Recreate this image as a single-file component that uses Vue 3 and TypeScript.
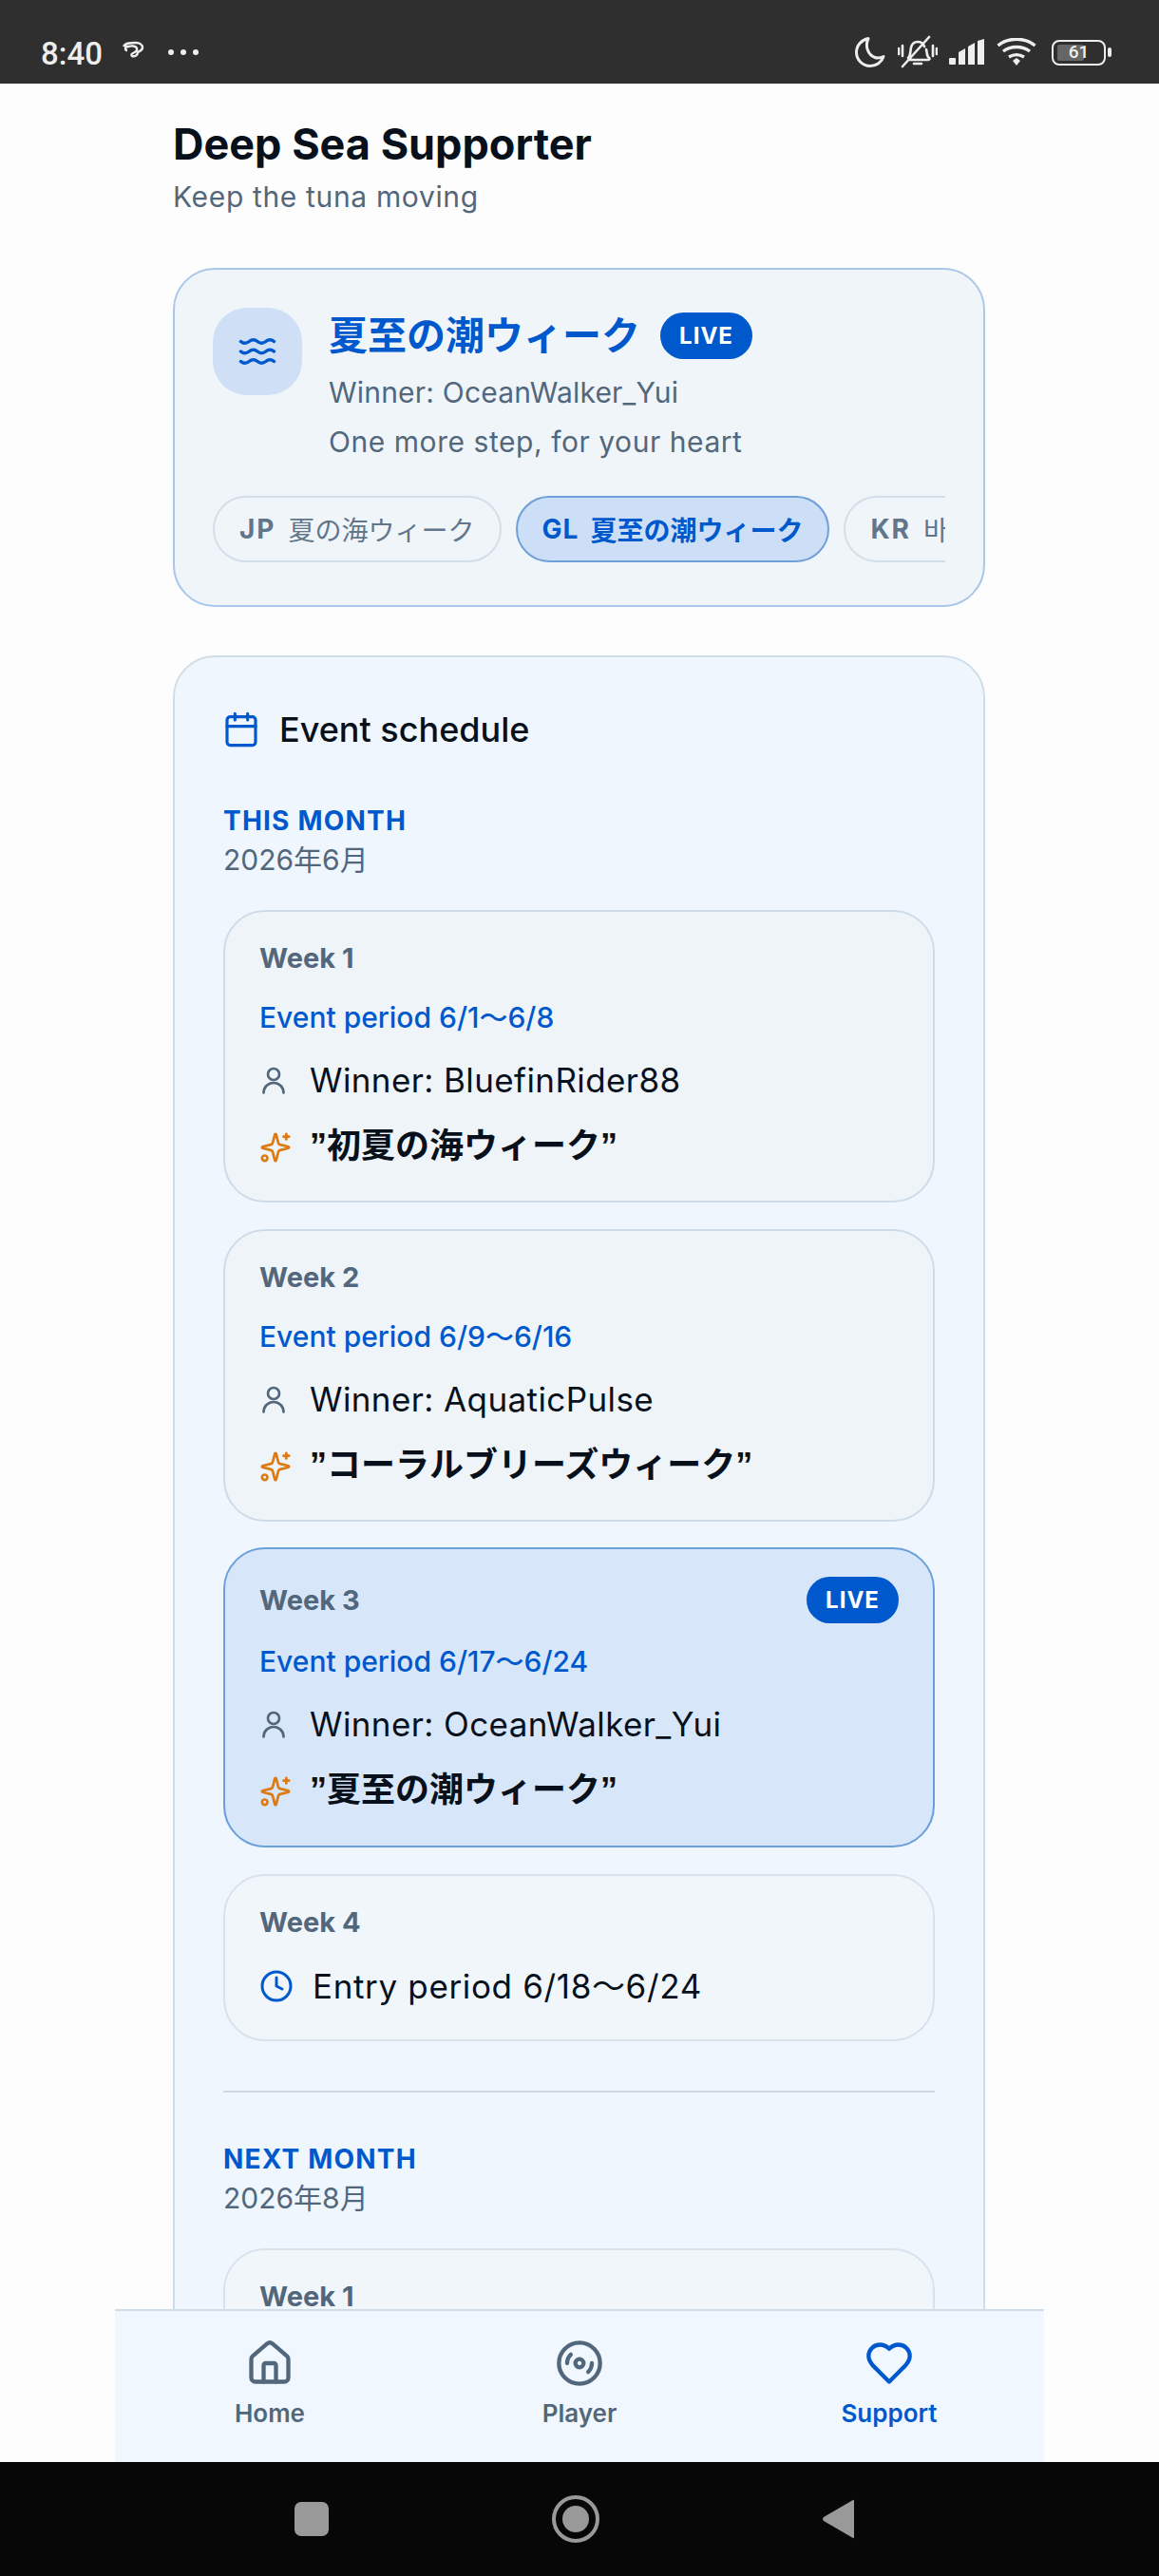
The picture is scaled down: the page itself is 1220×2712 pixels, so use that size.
<script setup lang="ts">
interface Week {
  label: string
  period?: string
  winner?: string
  theme?: string
  live?: boolean
  entry?: string
}
const weeks: Week[] = [
  { label: 'Week 1', period: 'Event period 6/1〜6/8', winner: 'Winner: BluefinRider88', theme: '”初夏の海ウィーク”' },
  { label: 'Week 2', period: 'Event period 6/9〜6/16', winner: 'Winner: AquaticPulse', theme: '”コーラルブリーズウィーク”' },
  { label: 'Week 3', period: 'Event period 6/17〜6/24', winner: 'Winner: OceanWalker_Yui', theme: '”夏至の潮ウィーク”', live: true },
  { label: 'Week 4', entry: 'Entry period 6/18〜6/24' },
]
const chips = [
  { code: 'JP', name: '夏の海ウィーク', active: false },
  { code: 'GL', name: '夏至の潮ウィーク', active: true },
  { code: 'KR', name: '바다의 주간', active: false },
]
</script>

<template>
  <div class="phone">
    <header class="status">
      <div class="status-left">
        <span class="time">8:40</span>
        <svg class="bird" width="24" height="20" viewBox="0 0 24 20" fill="none">
          <path d="M2 6c2-4 8-4 13-4 4 0 7 2 7 5 0 3-3 4-5 5 0 3-3 5-6 4-1-1-1-2 1-3 2-1 5-3 4-5-1-3-6-3-9-2-2 0-3 1-3 2 0 1 1 2 2 2" stroke="#eee" stroke-width="2.4" />
        </svg>
        <span class="dots"><i></i><i></i><i></i></span>
      </div>
      <div class="status-right">
        <svg width="34" height="34" viewBox="0 0 34 34" fill="none"><path d="M15 2.500C8 4 2.500 9.500 2.500 17c0 8 6.500 14.500 14.500 14.500 6.500 0 12-4 14-10-3 1.500-6 2-9 1C15 20 11 11 15 2.500Z" stroke="#eee" stroke-width="3" stroke-linejoin="round"/></svg>
        <svg width="42" height="36" viewBox="0 0 42 36" fill="none" stroke="#eee" stroke-width="2.600" stroke-linecap="round"><path d="M11 24c3-3 2-7 3-11 1-4 4-6 7-6s6 2 7 5M30 15c1 3 0 7 3 9 1 1 0 2-1 2H13M17 30h8M33 2 5 33M1 14v6M5 11v11M37 11v11M41 14v6"/></svg>
        <svg width="38" height="28" viewBox="0 0 38 28" fill="#eee"><rect x="0" y="20" width="7" height="7" rx="1"/><path d="M10 14l7-4v17h-7zM20 8l7-4v23h-7zM30 2l7-2v27h-7z"/></svg>
        <svg width="42" height="30" viewBox="0 0 42 30" fill="none" stroke="#eee" stroke-width="3.400"><path d="M1.500 8c11-9 28-9 39 0M7 14c8-6 20-6 28 0M13 20c5-3 11-3 16 0"/><path d="M17 24l4-3 4 3-4 5z" fill="#eee" stroke="none"/></svg>
        <div class="battery">
          <div class="batt-body"><span class="batt-fill"></span><span class="batt-num">61</span></div>
          <span class="batt-tip"></span>
        </div>
      </div>
    </header>

    <main class="screen">
      <div class="content">
        <h1 class="title">Deep Sea Supporter</h1>
        <p class="subtitle">Keep the tuna moving</p>

        <section class="hero">
          <div class="hero-top">
            <div class="hero-icon">
              <svg width="42" height="42" viewBox="0 0 24 24" fill="none" stroke="#0059cc" stroke-width="2" stroke-linecap="round" stroke-linejoin="round">
                <path d="M2 6c.6.5 1.200 1 2.500 1C7 7 7 5 9.500 5c2.600 0 2.400 2 5 2 2.500 0 2.500-2 5-2 1.300 0 1.900.5 2.500 1"/>
                <path d="M2 12c.6.5 1.200 1 2.500 1 2.500 0 2.500-2 5-2 2.600 0 2.400 2 5 2 2.500 0 2.500-2 5-2 1.300 0 1.900.5 2.500 1"/>
                <path d="M2 18c.6.5 1.200 1 2.500 1 2.500 0 2.500-2 5-2 2.600 0 2.400 2 5 2 2.500 0 2.500-2 5-2 1.300 0 1.900.5 2.500 1"/>
              </svg>
            </div>
            <div class="hero-text">
              <div class="hero-head">
                <span class="hero-name">夏至の潮ウィーク</span>
                <span class="live">LIVE</span>
              </div>
              <p class="hero-line first">Winner: OceanWalker_Yui</p>
              <p class="hero-line">One more step, for your heart</p>
            </div>
          </div>
          <div class="chips">
            <div v-for="c in chips" :key="c.code" class="chip" :class="{ active: c.active }">
              <b>{{ c.code }}</b><span>{{ c.name }}</span>
            </div>
          </div>
        </section>

        <section class="schedule">
          <div class="sched-head">
            <svg width="40" height="40" viewBox="0 0 24 24" fill="none" stroke="#0059cc" stroke-width="1.900" stroke-linecap="round" stroke-linejoin="round">
              <path d="M8 2v4M16 2v4"/><rect x="3" y="4" width="18" height="18" rx="2"/><path d="M3 10h18"/>
            </svg>
            <h2>Event schedule</h2>
          </div>

          <div class="month-label">THIS MONTH</div>
          <div class="month-date">2026年6月</div>

          <div class="weeks">
            <article v-for="w in weeks" :key="w.label" class="week" :class="{ current: w.live, upcoming: !!w.entry }">
              <div class="week-top">
                <span class="week-label">{{ w.label }}</span>
                <span v-if="w.live" class="live">LIVE</span>
              </div>
              <template v-if="w.period">
                <div class="period">{{ w.period }}</div>
                <div class="row winner">
                  <svg width="36" height="36" viewBox="0 0 24 24" fill="none" stroke="#52677c" stroke-width="1.800" stroke-linecap="round"><circle cx="12" cy="8" r="4"/><path d="M19 21a7 7 0 0 0-14 0"/></svg>
                  <span>{{ w.winner }}</span>
                </div>
                <div class="row theme">
                  <svg width="34" height="34" viewBox="0 0 24 24" fill="none" stroke="#dd7a12" stroke-width="1.900" stroke-linecap="round" stroke-linejoin="round"><path d="M9.937 15.500A2 2 0 0 0 8.500 14.063l-6.135-1.582a.5.5 0 0 1 0-.962L8.500 9.936A2 2 0 0 0 9.937 8.500l1.582-6.135a.5.5 0 0 1 .963 0L14.063 8.500A2 2 0 0 0 15.500 9.937l6.135 1.581a.5.5 0 0 1 0 .964L15.500 14.063a2 2 0 0 0-1.437 1.437l-1.582 6.135a.5.5 0 0 1-.963 0z"/><path d="M20 2v4M22 4h-4"/><circle cx="4" cy="20" r="2"/></svg>
                  <span>{{ w.theme }}</span>
                </div>
              </template>
              <div v-else class="row entry">
                <svg width="36" height="36" viewBox="0 0 24 24" fill="none" stroke="#0059cc" stroke-width="2" stroke-linecap="round" stroke-linejoin="round"><circle cx="12" cy="12" r="10"/><path d="M12 6v6l4 2"/></svg>
                <span>{{ w.entry }}</span>
              </div>
            </article>
          </div>

          <hr class="divider" />

          <div class="month-label">NEXT MONTH</div>
          <div class="month-date">2026年8月</div>
          <article class="week next">
            <div class="week-top"><span class="week-label">Week 1</span></div>
          </article>
        </section>
      </div>

      <nav class="tabbar">
        <div class="tab">
          <svg width="52" height="52" viewBox="0 0 24 24" fill="none" stroke="currentColor" stroke-width="2" stroke-linecap="round" stroke-linejoin="round"><path d="M15 21v-8a1 1 0 0 0-1-1h-4a1 1 0 0 0-1 1v8"/><path d="M3 10a2 2 0 0 1 .709-1.528l7-5.999a2 2 0 0 1 2.582 0l7 5.999A2 2 0 0 1 21 10v9a2 2 0 0 1-2 2H5a2 2 0 0 1-2-2z"/></svg>
          <span>Home</span>
        </div>
        <div class="tab">
          <svg width="52" height="52" viewBox="0 0 24 24" fill="none" stroke="currentColor" stroke-width="2" stroke-linecap="round" stroke-linejoin="round"><circle cx="12" cy="12" r="10"/><path d="M6 12c0-1.700.7-3.200 1.800-4.200"/><circle cx="12" cy="12" r="2"/><path d="M18 12c0 1.700-.7 3.200-1.800 4.200"/></svg>
          <span>Player</span>
        </div>
        <div class="tab on">
          <svg width="52" height="52" viewBox="0 0 24 24" fill="none" stroke="currentColor" stroke-width="2" stroke-linecap="round" stroke-linejoin="round"><path d="M19 14c1.490-1.460 3-3.210 3-5.500A5.500 5.500 0 0 0 16.500 3c-1.760 0-3 .5-4.500 2-1.500-1.500-2.740-2-4.500-2A5.500 5.500 0 0 0 2 8.500c0 2.300 1.500 4.050 3 5.500l7 7Z"/></svg>
          <span>Support</span>
        </div>
      </nav>
    </main>

    <footer class="sysnav">
      <span class="sq"></span>
      <span class="ring"><i></i></span>
      <svg width="36" height="44" viewBox="0 0 36 44"><path d="M34 3v38q0 2-2 .5L2 24q-2-2 0-4L32 2.500q2-1.500 2 .5Z" fill="#999"/></svg>
    </footer>
  </div>
</template>

<style>
html, body { margin: 0; background: #fdfdfd; }
</style>

<style scoped>
.phone {
  width: 1220px;
  height: 2712px;
  display: flex;
  flex-direction: column;
  overflow: hidden;
  background: #fdfdfd;
  font-family: Inter, "Noto Sans CJK JP", sans-serif;
  color: #08111b;
}
.status {
  height: 88px;
  flex: none;
  background: #2f2f2f;
  display: flex;
  justify-content: space-between;
  align-items: flex-end;
  padding: 0 50px 14px 43px;
  box-sizing: border-box;
  color: #eee;
}
.status-left { display: flex; align-items: center; gap: 17px; padding-bottom: 0; margin-bottom: -2px; }
.time { font: 500 33px/38px Roboto, sans-serif; }
.bird { margin-top: -8px; margin-left: 3px; }
.dots { display: flex; gap: 7px; margin-left: 8px; margin-top: -4px; }
.dots i { width: 6px; height: 6px; border-radius: 50%; background: #eee; }
.status-right { display: flex; align-items: center; gap: 12px; margin-bottom: 1px; }
.battery { display: flex; align-items: center; gap: 2px; margin-left: 4px; }
.batt-body {
  position: relative;
  width: 57px;
  height: 27px;
  border: 2.500px solid #eee;
  border-radius: 8px;
  box-sizing: border-box;
}
.batt-fill { position: absolute; left: 4px; top: 3px; bottom: 3px; width: 28px; background: #666; border-radius: 2px; }
.batt-num { position: absolute; left: 0; right: 0; top: 0; text-align: center; font: 500 19px/22px Roboto, sans-serif; color: #eee; }
.batt-tip { width: 4px; height: 10px; background: #eee; border-radius: 2px; }

.screen { position: relative; flex: 1; min-height: 0; overflow: hidden; }
.content { width: 855px; margin-left: 182px; padding-top: 38px; }
.title { margin: 0; font-size: 45px; line-height: 52px; font-weight: 700; }
.subtitle { margin: 10px 0 0; font-size: 30px; line-height: 38px; color: #52677c; letter-spacing: .65px; }

.hero {
  margin-top: 56px;
  height: 357px;
  box-sizing: border-box;
  border: 2px solid #a9c7e8;
  border-radius: 44px;
  background: #f0f5fa;
  padding: 40px 40px 0;
}
.hero-top { display: flex; gap: 28px; }
.hero-icon {
  width: 94px; height: 92px; border-radius: 36px; background: #cfe0f6;
  display: flex; align-items: center; justify-content: center; flex: none;
}
.hero-text { min-width: 0; }
.hero-head { display: flex; align-items: center; gap: 21px; margin-top: 4px; height: 50px; }
.hero-name { font-size: 41px; line-height: 50px; font-weight: 700; color: #0059cc; }
.live {
  display: inline-flex; align-items: center; justify-content: center;
  width: 97px; height: 49px; border-radius: 25px;
  background: #0059cc; color: #fff; font-size: 24px; font-weight: 700; letter-spacing: 1px;
}
.hero-line { margin: 0; font-size: 30px; line-height: 52px; color: #52677c; letter-spacing: .55px; }
.hero-line.first { margin-top: 9px; letter-spacing: .2px; }
.chips { display: flex; gap: 15px; overflow: hidden; margin-top: 31px; height: 70px; }
.chip {
  flex: none; height: 70px; box-sizing: border-box; display: flex; align-items: center; gap: 13px;
  padding: 0 26px; border: 2px solid #d3dee9; border-radius: 35px; color: #62768a; font-size: 28px;
}
.chip b { font-weight: 700; letter-spacing: 2px; }
.chip.active { background: #cddff6; border-color: #6f9fd8; color: #0059cc; font-weight: 600; gap: 12px; }
.chip.active b { letter-spacing: 1px; }

.schedule {
  margin-top: 51px;
  border: 2px solid #cfdde8;
  border-radius: 44px;
  background: #eff6fe;
  padding: 52px 51px 60px;
}
.sched-head { display: flex; align-items: center; gap: 20px; height: 48px; margin-bottom: 54px; margin-left: -1px; }
.sched-head h2 { margin: 0; font-size: 36px; font-weight: 500; line-height: 48px; }
.month-label { font-size: 28px; font-weight: 700; line-height: 36px; letter-spacing: 1.200px; color: #0059cc; }
.month-date { font-size: 30px; line-height: 38px; margin-top: 4px; color: #52677c; }
.weeks { display: flex; flex-direction: column; gap: 27.5px; margin-top: 34px; }
.week {
  box-sizing: border-box; border: 2px solid #cfdce8; border-radius: 44px;
  background: #eff4f9; padding: 31px 36px 31px;
}
.week.current { background: #d7e6f8; border-color: #6b9fda; padding-top: 29px; padding-bottom: 32px; }
.week.current .period { margin-top: 22px; }
.week.upcoming { background: #f1f6fb; border-color: #d7e2ec; padding-bottom: 34px; }
.week.next { background: #f1f6fb; border-color: #d7e2ec; margin-top: 34px; height: 300px; }
.week-top { display: flex; justify-content: space-between; align-items: center; min-height: 36px; }
.week-label { font-size: 29px; font-weight: 700; line-height: 36px; color: #52677c; }
.period { margin-top: 26px; font-size: 30px; font-weight: 500; line-height: 36px; color: #0059cc; }
.row { display: flex; align-items: center; line-height: 44px; }
.row svg { flex: none; }
.winner { margin-top: 26px; height: 44px; font-size: 35px; gap: 20px; margin-left: -3px; letter-spacing: .4px; }
.theme { margin-top: 24px; height: 50px; font-size: 36px; font-weight: 700; gap: 19px; font-family: "Liberation Sans", "Noto Sans CJK JP", sans-serif; }
.theme span { transform: translateY(-1px); }
.entry { margin-top: 27px; height: 44px; font-size: 35px; gap: 20px; letter-spacing: .65px; }

.divider { border: 0; height: 2px; background: #cddae5; margin: 52px 0 52px; }

.tabbar {
  position: absolute; left: 121px; right: 121px; bottom: 0; height: 161px;
  box-sizing: border-box; border-top: 2px solid #cfdde8; background: #f0f7fe;
  display: flex; padding: 29px 0 0 0;
}
.tab { flex: 1; display: flex; flex-direction: column; align-items: center; gap: 10px; color: #52677c; font-size: 26px; font-weight: 600; line-height: 34px; }
.tab.on { color: #0059cc; }

.sysnav {
  height: 120px; flex: none; background: #070707; display: flex; align-items: center;
  padding-left: 310px; box-sizing: border-box;
}
.sq { width: 36px; height: 36px; border-radius: 7px; background: #999; }
.ring {
  width: 50px; height: 50px; box-sizing: border-box; margin-left: 235px; border: 4px solid #999; border-radius: 50%;
  display: flex; align-items: center; justify-content: center;
}
.ring i { width: 28px; height: 28px; border-radius: 50%; background: #999; }
.sysnav svg { margin-left: 234px; }
</style>
